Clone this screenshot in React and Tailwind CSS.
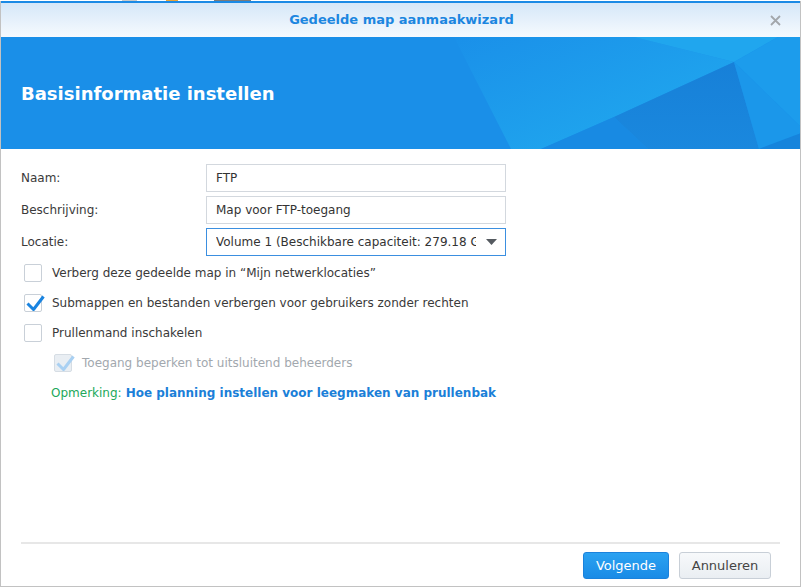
import React from "react";

const font = { fontFamily: '"DejaVu Sans", Verdana, sans-serif' };

function Banner() {
  return (
    <div className="relative h-[112px] bg-[#1a8fe8] flex items-center pl-[20px] overflow-hidden">
      {/* decorative polygons */}
      <svg className="absolute inset-0" width="800" height="112" viewBox="0 0 800 112">
        <defs>
          <linearGradient id="mid" x1="0" y1="0" x2="1" y2="1">
            <stop offset="0" stopColor="#1a90e9" />
            <stop offset="1" stopColor="#21acef" />
          </linearGradient>
          <linearGradient id="dark" x1="0" y1="0" x2="0" y2="1">
            <stop offset="0" stopColor="#1780d8" />
            <stop offset="1" stopColor="#1a88de" />
          </linearGradient>
        </defs>
        <polygon points="453,0 633,0 733,25 613,80 540,112 510,112" fill="url(#mid)" />
        <polygon points="633,0 777,0 733,25" fill="#20a6ee" />
        <polygon points="777,0 800,0 800,90 733,25" fill="#1c9cec" />
        <polygon points="613,80 733,25 758,112 647,112" fill="url(#dark)" />
        <polygon points="540,112 613,80 647,112" fill="#188ae3" />
        <polygon points="733,25 800,90 800,96 758,112" fill="#1b97ea" />
        <polygon points="758,112 800,96 800,112" fill="#1684dc" />
      </svg>
      <h1 className="relative text-white font-bold text-[18px]" style={font}>
        Basisinformatie instellen
      </h1>
    </div>
  );
}

function Check({ checked, disabled }) {
  return (
    <span
      className={
        "relative block w-[18px] h-[18px] rounded-[2px] border shrink-0 " +
        (disabled ? "border-[#d6dde4] bg-[#e9eef3]" : "border-[#c9d0d8] bg-white")
      }
    >
      {checked && (
        <svg className="absolute left-0 top-0 overflow-visible" width="18" height="18" viewBox="0 0 18 18">
          <path
            d="M2.5 8.5 L8.5 14.5 L18.5 1.5"
            fill="none"
            stroke={disabled ? "#a9d0f2" : "#1a84e0"}
            strokeWidth="3"
            strokeLinejoin="round"
          />
        </svg>
      )}
    </span>
  );
}

function Row({ label, children }) {
  return (
    <div className="flex items-center h-[28px]">
      <span className="w-[185px] text-[12px] text-[#3a3a3a]">{label}</span>
      {children}
    </div>
  );
}

function CheckRow({ label, checked, disabled, indent }) {
  return (
    <div className={"flex items-center h-[30px] gap-[10px] " + (indent ? "pl-[33px]" : "pl-[3px]")}>
      <Check checked={checked} disabled={disabled} />
      <span className={"text-[12px] " + (disabled ? "text-[#a2a8ae]" : "text-[#3a3a3a]")}>{label}</span>
    </div>
  );
}

export default function App() {
  return (
    <div className="w-[802px] h-[587px] bg-white overflow-hidden" style={font}>
      {/* desktop behind the window */}
      <div className="flex h-[1px]">
        <span className="ml-[122px] w-[15px] bg-[#c9c9c9]" />
        <span className="ml-[29px] w-[12px] bg-[#e8a43a]" />
        <span className="ml-[36px] w-[37px] bg-[#7a7a7a]" />
      </div>

      <div className="w-[801px] h-[586px] border-l border-r border-b border-[#c2c2c2] flex flex-col">
        <div className="h-[2px] bg-[#1b8ae5]" />
        <div className="h-[34px] bg-linear-to-b from-[#d5e7f8] to-[#f6fafe] flex items-center justify-center relative">
          <span className="text-[13px] font-bold text-[#1c86e0] pl-[2px]">Gedeelde map aanmaakwizard</span>
          <svg className="absolute right-[19px] top-[12px]" width="11" height="11" viewBox="0 0 11 11">
            <path d="M1 1 L10 10 M10 1 L1 10" stroke="#a3a7ab" strokeWidth="1.8" />
          </svg>
        </div>
        <Banner />

        <div className="flex-1 pl-[20px] pt-[15px]">
          <div className="flex flex-col gap-[4px]">
            <Row label="Naam:">
              <div className="w-[300px] h-[28px] border border-[#d3d8de] flex items-center px-[9px] text-[12px] text-[#333]">
                FTP
              </div>
            </Row>
            <Row label="Beschrijving:">
              <div className="w-[300px] h-[28px] border border-[#d3d8de] flex items-center px-[9px] text-[12px] text-[#333]">
                Map voor FTP-toegang
              </div>
            </Row>
            <Row label="Locatie:">
              <div className="w-[300px] h-[28px] border border-[#3b8fe0] flex items-center pl-[9px] pr-[8px] text-[12px] text-[#333]">
                <span className="flex-1 overflow-hidden whitespace-nowrap">Volume 1 (Beschikbare capaciteit: 279.18 GB)</span>
                <svg className="ml-[10px] shrink-0" width="11" height="6" viewBox="0 0 11 6">
                  <path d="M0 0 L11 0 L5.5 6 Z" fill="#555a60" />
                </svg>
              </div>
            </Row>
          </div>

          <div className="mt-[2px] flex flex-col">
            <CheckRow label="Verberg deze gedeelde map in “Mijn netwerklocaties”" />
            <CheckRow label="Submappen en bestanden verbergen voor gebruikers zonder rechten" checked />
            <CheckRow label="Prullenmand inschakelen" />
            <CheckRow label="Toegang beperken tot uitsluitend beheerders" checked disabled indent />
            <div className="h-[30px] flex items-center pl-[30px] text-[12px]">
              <span className="text-[#22a85a]">Opmerking:</span>
              <span className="ml-[4px] font-bold text-[#1b7fd8]">Hoe planning instellen voor leegmaken van prullenbak</span>
            </div>
          </div>
        </div>

        <div className="mx-[20px] border-t-2 border-[#e7e7e7] pt-[8px] pb-[7px] pr-[9px] flex justify-end gap-[10px]">
          <button className="w-[86px] h-[27px] rounded-[3px] border border-[#1b82dc] bg-linear-to-b from-[#2ba2f1] to-[#1a8be6] text-white text-[13px]">
            Volgende
          </button>
          <button className="w-[92px] h-[27px] rounded-[3px] border border-[#c8cfd7] bg-linear-to-b from-[#f7f9fb] to-[#eaeef2] text-[#444] text-[13px]">
            Annuleren
          </button>
        </div>
      </div>
    </div>
  );
}
